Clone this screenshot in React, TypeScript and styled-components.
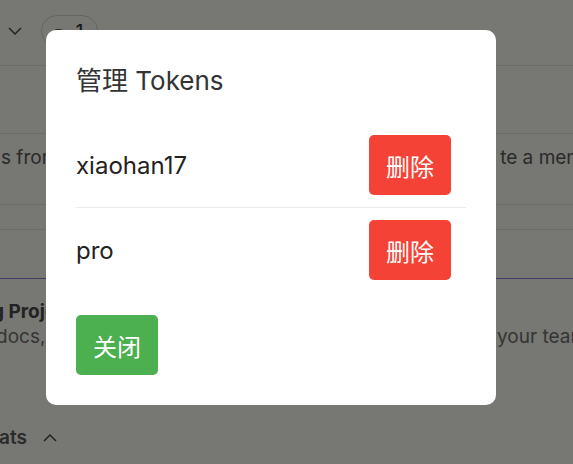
import React from "react";
import styled, { createGlobalStyle } from "styled-components";

const Global = createGlobalStyle`
  html, body { margin: 0; padding: 0; }
  body {
    width: 573px;
    height: 464px;
    overflow: hidden;
    background: #efefe8;
    font-family: Inter, "Noto Sans CJK SC", sans-serif;
  }
`;

const Page = styled.div`
  width: 573px;
  height: 464px;
  background: #efefe8;
  color: #555;
  display: flex;
  flex-direction: column;
  overflow: hidden;
`;

const TopBar = styled.div`
  height: 66px;
  border-bottom: 1px solid #d6d6d0;
  display: flex;
  align-items: center;
  gap: 19px;
  padding-bottom: 3px;
  box-sizing: border-box;
  flex-shrink: 0;
`;

const Crumb = styled.div`
  display: flex;
  align-items: center;
  gap: 8px;
  font-size: 17px;
  margin-left: -6px;
`;

const Pill = styled.div`
  height: 32px;
  width: 57px;
  box-sizing: border-box;
  border: 1px solid #c8c8c2;
  border-radius: 16px;
  display: flex;
  align-items: center;
  justify-content: center;
  gap: 14px;
  font-size: 18px;
  font-weight: 500;
  color: #333;
`;

const PillIcon = styled.span`
  font-size: 11px;
  color: #666;
`;

const Spacer = styled.div<{ $h: number }>`
  height: ${(p) => p.$h}px;
  flex-shrink: 0;
`;

const Band = styled.div<{ $h: number; $line?: string }>`
  height: ${(p) => p.$h}px;
  border-top: 1px solid ${(p) => p.$line || "#d6d6d0"};
  display: flex;
  justify-content: space-between;
  align-items: flex-start;
  box-sizing: border-box;
  flex-shrink: 0;
`;

const BgText = styled.span<{ $pad?: number; $left?: number; $right?: number }>`
  font-size: 19px;
  color: #555;
  padding-top: ${(p) => p.$pad ?? 0}px;
  margin-left: ${(p) => p.$left ?? 0}px;
  margin-right: ${(p) => p.$right ?? 0}px;
  white-space: nowrap;
`;

const Block = styled.div<{ $right?: boolean }>`
  display: flex;
  flex-direction: column;
  padding-top: 20px;
  width: ${(p) => (p.$right ? "76px" : "auto")};
  overflow: hidden;
`;

const BoldLine = styled.span`
  font-size: 19px;
  line-height: 25px;
  font-weight: 700;
  color: #444;
  margin-left: -8px;
  white-space: nowrap;
`;

const SubLine = styled.span<{ $left?: number }>`
  font-size: 19px;
  line-height: 25px;
  color: #6a6a6a;
  margin-left: ${(p) => p.$left ?? 0}px;
  white-space: nowrap;
`;

const Footer = styled.div`
  display: flex;
  align-items: center;
  gap: 16px;
  padding-top: 6px;
  font-size: 19px;
  font-weight: 600;
  color: #555;
  margin-left: -1px;
`;

const Overlay = styled.div`
  position: fixed;
  inset: 0;
  background: rgba(0, 0, 0, 0.5);
  display: flex;
  align-items: flex-start;
  padding: 30px 0 0 46px;
`;

const Modal = styled.div`
  width: 450px;
  box-sizing: border-box;
  background: #fff;
  border-radius: 10px;
  padding: 30px;
  display: flex;
  flex-direction: column;
  align-items: flex-start;
`;

const Title = styled.h2`
  margin: 0 0 21px;
  font-size: 26px;
  line-height: 42px;
  font-weight: 400;
  color: #333;
`;

const List = styled.div`
  width: 100%;
  display: flex;
  flex-direction: column;
`;

const Row = styled.div<{ $last?: boolean }>`
  display: flex;
  justify-content: space-between;
  align-items: center;
  padding: 12px 15px 12px 0;
  border-bottom: ${(p) => (p.$last ? "none" : "1px solid #ebebeb")};
`;

const Name = styled.span`
  font-size: 24px;
  color: #222;
`;

const Button = styled.button<{ $tone: "danger" | "ok" }>`
  height: 60px;
  padding: 0 17px;
  border: none;
  border-radius: 5px;
  background: ${(p) => (p.$tone === "danger" ? "#f44336" : "#4caf50")};
  color: #fff;
  font-family: "Noto Sans CJK SC", sans-serif;
  font-size: 24px;
  cursor: pointer;
`;

const CloseButton = styled(Button)`
  margin-top: 23px;
`;

const Chevron = ({ up }: { up?: boolean }) => (
  <svg width="14" height="9" viewBox="0 0 14 9" fill="none" stroke="#444" strokeWidth="1.5">
    <path d={up ? "M1 8 L7 2 L13 8" : "M1 1 L7 7 L13 1"} />
  </svg>
);

const tokens = ["xiaohan17", "pro"];

export default function App() {
  return (
    <>
      <Global />
      <Page>
        <TopBar>
          <Crumb>
            <span>t</span>
            <Chevron />
          </Crumb>
          <Pill>
            <PillIcon>π</PillIcon>
            <span>1</span>
          </Pill>
        </TopBar>
        <Spacer $h={67} />
        <Band $h={71}>
          <BgText $pad={12} $left={1}>s from the</BgText>
          <BgText $pad={12} $right={-10}>te a mem</BgText>
        </Band>
        <Band $h={25} />
        <Band $h={49} />
        <Band $h={142} $line="#7f7fc8">
          <Block>
            <BoldLine>g Project</BoldLine>
            <SubLine $left={-4}>docs, and</SubLine>
          </Block>
          <Block $right>
            <span style={{ height: 25 }} />
            <SubLine>your team</SubLine>
          </Block>
        </Band>
        <Footer>
          <span>ats</span>
          <Chevron up />
        </Footer>
      </Page>
      <Overlay>
        <Modal>
          <Title>管理 Tokens</Title>
          <List>
            {tokens.map((t, i) => (
              <Row key={t} $last={i === tokens.length - 1}>
                <Name>{t}</Name>
                <Button $tone="danger">删除</Button>
              </Row>
            ))}
          </List>
          <CloseButton $tone="ok">关闭</CloseButton>
        </Modal>
      </Overlay>
    </>
  );
}
